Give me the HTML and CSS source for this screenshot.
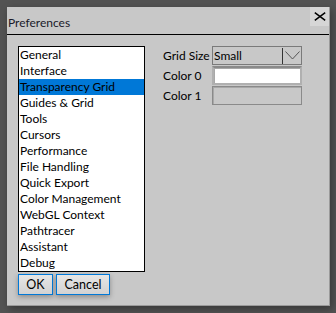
FILE: index.html
```html
<!DOCTYPE html>
<html lang="en">
<head>
  <meta charset="UTF-8">
  <title>Preferences</title>
  <link rel="stylesheet" href="styles.css">
</head>
<body>
  <div class="dialog">
    <div class="titlebar">
      <span class="title">Preferences</span>
      <button class="close" title="Close">
        <svg width="12" height="9" viewBox="0 0 12 9"><path d="M0.8 0.6 L11.2 8.4 M11.2 0.6 L0.8 8.4" stroke="#000" stroke-width="1.5" fill="none"/></svg>
      </button>
    </div>

    <div class="content">
      <div class="left">
        <ul class="list">
          <li>General</li>
          <li>Interface</li>
          <li class="selected">Transparency Grid</li>
          <li>Guides &amp; Grid</li>
          <li>Tools</li>
          <li>Cursors</li>
          <li>Performance</li>
          <li>File Handling</li>
          <li>Quick Export</li>
          <li>Color Management</li>
          <li>WebGL Context</li>
          <li>Pathtracer</li>
          <li>Assistant</li>
          <li>Debug</li>
        </ul>
        <div class="buttons">
          <button class="btn ok">OK</button>
          <button class="btn cancel">Cancel</button>
        </div>
      </div>

      <div class="settings">
        <label>Grid Size</label>
        <div class="select">
          <span class="value">Small</span>
          <span class="arrow">
            <svg width="15" height="9" viewBox="0 0 15 9"><path d="M0.5 0.5 L7.5 8 L14.5 0.5" stroke="#555" stroke-width="1" fill="none"/></svg>
          </span>
        </div>
        <label>Color 0</label>
        <div class="color white"></div>
        <label>Color 1</label>
        <div class="color grey"></div>
      </div>
    </div>
  </div>
</body>
</html>
```

FILE: styles.css
```css
body {
  margin: 0;
  height: 313px;
  background: #535353;
  padding: 7px 6px 7px 7px;
  box-sizing: border-box;
  font-family: Lato, "Open Sans", sans-serif;
  font-size: 12px;
  color: #000;
  overflow: hidden;
}

.dialog {
  width: 323px;
  height: 299px;
  box-sizing: border-box;
  background: #c8c8c8;
  border-right: 1px solid #9a9a9a;
  border-bottom: 1px solid #9a9a9a;
  box-shadow: 2px 3px 8px rgba(0, 0, 0, 0.35);
  display: flex;
  flex-direction: column;
}

.titlebar {
  height: 27px;
  border-bottom: 1px solid #000;
  display: flex;
  align-items: flex-start;
  justify-content: space-between;
}

.title {
  margin-top: 8px;
  margin-left: 1px;
  line-height: 16px;
  color: #1a1a2a;
}

.close {
  width: 19px;
  height: 19px;
  padding: 0;
  border: none;
  background: #d6d6d6;
  display: flex;
  align-items: center;
  justify-content: center;
}

.content {
  display: flex;
  padding: 11px 0 0 11px;
  gap: 18px;
}

.list {
  list-style: none;
  margin: 0;
  padding: 0;
  width: 125px;
  border: 1px solid #000;
  background: #fff;
}

.list li {
  height: 16px;
  line-height: 16px;
  padding-left: 1px;
  white-space: nowrap;
}

.list li.selected {
  background: #0078d7;
}

.buttons {
  display: flex;
  gap: 3px;
  margin-top: 2px;
}

.btn {
  height: 21px;
  padding: 0;
  border: 1px solid #0078d7;
  background: linear-gradient(#e6e6e6, #d2d2d2);
  box-shadow: 0 2px 5px rgba(0, 0, 0, 0.3);
  font-family: inherit;
  font-size: 12.5px;
  color: #000;
}

.btn.ok {
  width: 35px;
}

.btn.cancel {
  width: 54px;
}

.settings {
  display: grid;
  grid-template-columns: 49px 90px;
  grid-auto-rows: 20px;
  align-items: start;
}

.settings label {
  line-height: 20px;
  white-space: nowrap;
}

.select {
  height: 19px;
  box-sizing: border-box;
  border: 1px solid #7a7a7a;
  display: flex;
  align-items: center;
}

.select .value {
  flex: 1;
  padding-left: 1px;
  line-height: 17px;
}

.select .arrow {
  width: 18px;
  height: 16px;
  border-left: 1px solid #333;
  display: flex;
  align-items: center;
  justify-content: center;
}

.color {
  height: 19px;
  box-sizing: border-box;
  border: 1px solid #8a8a8a;
  box-shadow: inset 1px 1px 0 #a8a8a8;
}

.color.white {
  background: #fff;
  border: 2px solid #b0b0b0;
  border-top-color: #8a8a8a;
}

.color.grey {
  background: #c8c8c8;
}
```
